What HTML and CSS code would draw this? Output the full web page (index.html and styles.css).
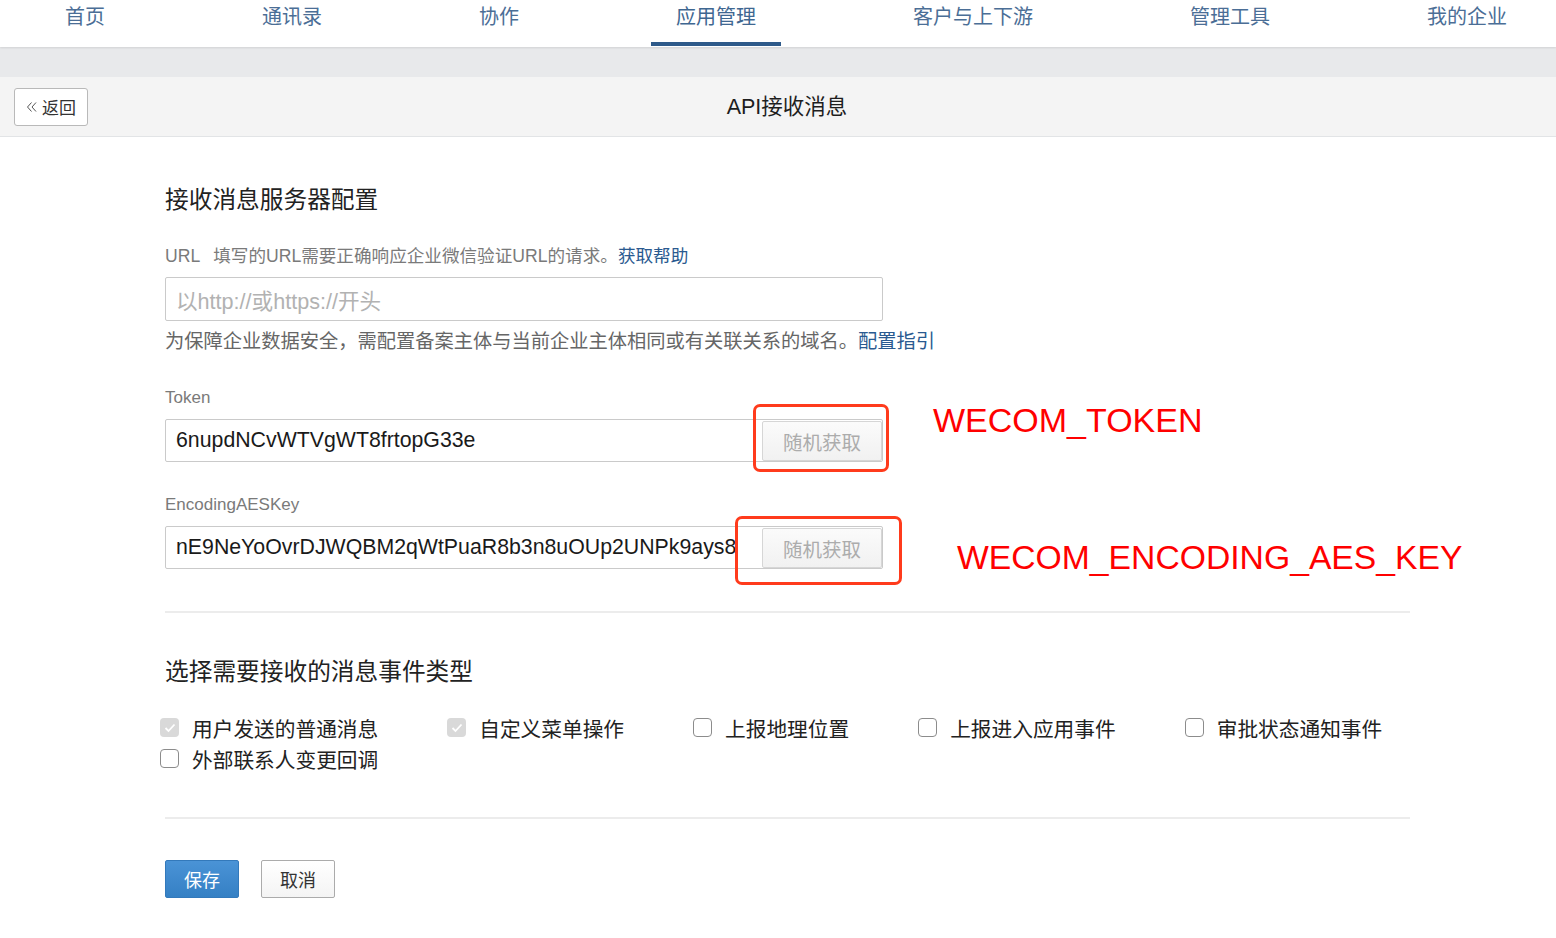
FILE: index.html
```html
<!DOCTYPE html>
<html lang="zh-CN">
<head>
<meta charset="utf-8">
<title>API接收消息</title>
<link rel="stylesheet" href="styles.css">
</head>
<body>
<nav class="topnav">
  <a class="nav-item">首页</a>
  <a class="nav-item">通讯录</a>
  <a class="nav-item">协作</a>
  <a class="nav-item active">应用管理</a>
  <a class="nav-item">客户与上下游</a>
  <a class="nav-item">管理工具</a>
  <a class="nav-item">我的企业</a>
</nav>
<div class="band"></div>
<header class="pagehead">
  <button class="back-btn"><svg class="back-icon" width="12" height="12" viewBox="0 0 12 12"><polyline points="5.5,1.5 1.5,6 5.5,10.5" fill="none" stroke="#555" stroke-width="1"/><polyline points="10,1.5 6,6 10,10.5" fill="none" stroke="#555" stroke-width="1"/></svg>返回</button>
  <h1 class="page-title">API接收消息</h1>
</header>
<main class="content">
  <h2 class="section-title first">接收消息服务器配置</h2>
  <div class="label url-label"><span class="url-key">URL</span>填写的URL需要正确响应企业微信验证URL的请求。<a class="link">获取帮助</a></div>
  <div class="field url-field"><span class="placeholder">以http://或https://开头</span></div>
  <div class="help">为保障企业数据安全，需配置备案主体与当前企业主体相同或有关联关系的域名。<a class="link">配置指引</a></div>

  <div class="label gap-label">Token</div>
  <div class="field key-field">
    <span class="value">6nupdNCvWTVgWT8frtopG33e</span>
    <span class="rand-btn">随机获取</span>
    <span class="mark mark-token"></span>
    <span class="note note-token">WECOM_TOKEN</span>
  </div>

  <div class="label gap-label">EncodingAESKey</div>
  <div class="field key-field">
    <span class="value">nE9NeYoOvrDJWQBM2qWtPuaR8b3n8uOUp2UNPk9ays8</span>
    <span class="rand-btn">随机获取</span>
    <span class="mark mark-aes"></span>
    <span class="note note-aes">WECOM_ENCODING_AES_KEY</span>
  </div>

  <hr class="divider">

  <h2 class="section-title second">选择需要接收的消息事件类型</h2>
  <ul class="events">
    <li class="event"><span class="cb checked"><svg width="12" height="10" viewBox="0 0 12 10"><polyline points="1.5,5 4.5,8 10.5,1.5" fill="none" stroke="#fff" stroke-width="1.8"/></svg></span>用户发送的普通消息</li>
    <li class="event"><span class="cb checked"><svg width="12" height="10" viewBox="0 0 12 10"><polyline points="1.5,5 4.5,8 10.5,1.5" fill="none" stroke="#fff" stroke-width="1.8"/></svg></span>自定义菜单操作</li>
    <li class="event"><span class="cb"></span>上报地理位置</li>
    <li class="event"><span class="cb"></span>上报进入应用事件</li>
    <li class="event"><span class="cb"></span>审批状态通知事件</li>
    <li class="event"><span class="cb"></span>外部联系人变更回调</li>
  </ul>

  <hr class="divider lower">

  <div class="actions">
    <button class="btn primary">保存</button>
    <button class="btn">取消</button>
  </div>
</main>
</body>
</html>
```

FILE: styles.css
```css
* { box-sizing: border-box; }
html, body { margin: 0; padding: 0; }
body {
  background: #fff;
  font-family: "Liberation Sans", "Noto Sans CJK SC", sans-serif;
  color: #222;
}
a { text-decoration: none; cursor: pointer; }

.topnav {
  position: relative;
  z-index: 2;
  display: flex;
  gap: 157px;
  height: 47px;
  padding-left: 65px;
  background: #fff;
  box-shadow: 0 1px 2px rgba(0,0,0,0.10);
}
.nav-item {
  display: block;
  font-size: 20px;
  line-height: 24px;
  padding-top: 5px;
  color: #4b6e96;
  white-space: nowrap;
}
.nav-item.active {
  margin: 0 -25px;
  padding: 5px 25px 0;
  height: 46px;
  border-bottom: 4px solid #2e5a8a;
  color: #3f6791;
}

.band {
  height: 30px;
  background: #e8e9eb;
}

.pagehead {
  display: flex;
  align-items: center;
  height: 60px;
  padding-left: 14px;
  background: #f4f4f4;
  border-bottom: 1px solid #e2e4e6;
}
.back-btn {
  display: flex;
  align-items: center;
  justify-content: center;
  gap: 4px;
  width: 74px;
  height: 38px;
  padding: 0;
  background: #fff;
  border: 1px solid #b9b9b9;
  border-radius: 3px;
  font-family: inherit;
  font-size: 17px;
  color: #333;
}
.back-icon { margin-top: 1px; }
.page-title {
  flex: 1;
  margin: 0;
  padding-right: 70px;
  text-align: center;
  font-size: 21.5px;
  font-weight: normal;
  line-height: 28px;
  color: #1e1e1e;
}

.content {
  width: 1245px;
  margin-left: 165px;
}
.section-title {
  margin: 0;
  font-size: 23.7px;
  font-weight: normal;
  line-height: 32px;
  color: #222;
}
.section-title.first { margin-top: 47px; }
.section-title.second { margin-top: 43px; }

.label {
  font-size: 17px;
  line-height: 24px;
  color: #7a7a7a;
}
.url-label { margin-top: 28px; font-size: 17.6px; }
.url-key { margin-right: 13px; }
.gap-label { margin-top: 31px; }
.link { color: #2a5a90; }

.field {
  position: relative;
  display: flex;
  align-items: stretch;
  width: 718px;
  margin-top: 9px;
  border: 1px solid #cacaca;
  border-radius: 2px;
  background: #fff;
}
.url-field { height: 44px; }
.key-field { height: 43px; }
.placeholder, .value {
  flex: 1;
  display: flex;
  align-items: center;
  padding-left: 10px;
  white-space: nowrap;
  overflow: hidden;
}
.placeholder { color: #b2b2b2; font-size: 21.6px; }
.value { color: #1a1a1a; font-size: 21.3px; }
.rand-btn {
  display: flex;
  align-items: center;
  justify-content: center;
  width: 120px;
  margin: 1px 0 0;
  border: 1px solid #d6d6d6;
  border-radius: 2px;
  background: linear-gradient(#fbfbfb, #f1f1f1);
  font-size: 19.5px;
  color: #acacac;
}

.mark {
  position: absolute;
  border: 3px solid #ff3b1c;
  border-radius: 7px;
  pointer-events: none;
}
.mark-token { left: 587px; top: -16px; width: 136px; height: 68px; }
.mark-aes { left: 569px; top: -11px; width: 167px; height: 69px; }
.note {
  position: absolute;
  font-family: "Liberation Sans", sans-serif;
  font-size: 34px;
  line-height: 40px;
  color: #ff0000;
  white-space: nowrap;
}
.note-token { left: 767px; top: -20px; }
.note-aes { left: 791px; top: 10px; font-size: 33.7px; }

.help {
  margin-top: 8px;
  font-size: 19.25px;
  line-height: 26px;
  color: #666;
}

.divider {
  margin: 42px 0 0;
  border: 0;
  border-top: 2px solid #ececec;
  height: 0;
}
.divider.lower { margin-top: 43px; }

.events {
  display: flex;
  flex-wrap: wrap;
  column-gap: 69px;
  margin: 24px 0 0 -5px;
  padding: 0;
  list-style: none;
}
.event {
  display: flex;
  align-items: center;
  height: 31px;
  font-size: 20.7px;
  color: #222;
  white-space: nowrap;
}
.cb {
  display: flex;
  align-items: center;
  justify-content: center;
  width: 19px;
  height: 19px;
  margin-right: 13px;
  border: 1.5px solid #8c8c8c;
  border-radius: 4px;
  background: #fff;
}
.cb.checked {
  border: 0;
  background: #d9d9d9;
}

.actions {
  display: flex;
  gap: 22px;
  margin-top: 41px;
}
.btn {
  width: 74px;
  height: 38px;
  padding: 0;
  border: 1px solid #ababab;
  border-radius: 2px;
  background: linear-gradient(#ffffff, #f4f4f4);
  font-family: inherit;
  font-size: 18px;
  color: #333;
}
.btn.primary {
  border-color: #3379bb;
  background: linear-gradient(#4a93d6, #3580c4);
  color: #fff;
}
```
